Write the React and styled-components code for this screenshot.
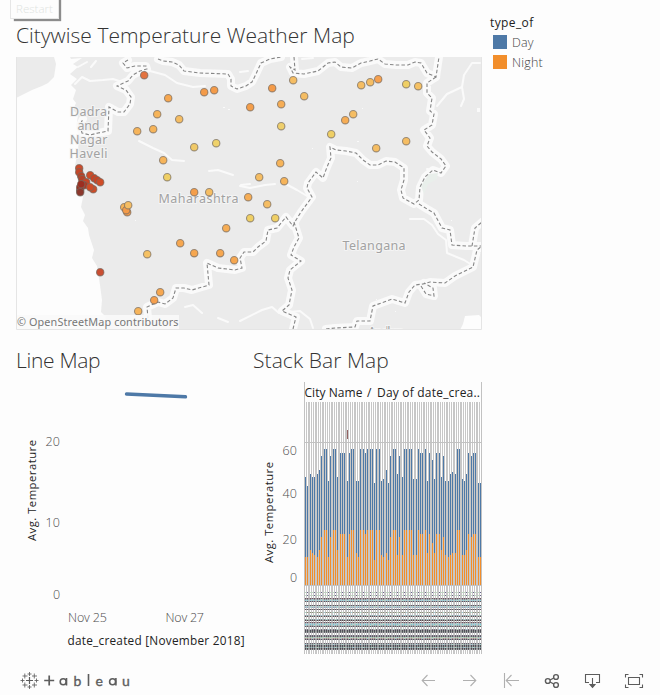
import React from 'react';
import styled, { createGlobalStyle } from 'styled-components';

const Global = createGlobalStyle`
  * { box-sizing: border-box; }
  body { margin: 0; background: #fdfdfd; font-family: 'Open Sans', 'Noto Sans', sans-serif; color: #333; }
  svg { display: block; }
  svg text { white-space: pre; }
`;
const Page = styled.main`
  position: relative; width: 660px; height: 695px; overflow: hidden;
  display: grid; grid-template-rows: 340px 322px 33px;
`;
const RestartButton = styled.button`
  position: absolute; left: 10px; top: -8px; width: 49px; height: 27px; padding: 7px 0 0;
  border: 1px solid #e6e6e6; background: #fdfdfd; color: #dfe4e1; text-align: center;
  font: 300 11.5px/16px 'Open Sans', sans-serif; box-shadow: 3px 3px 1px -1px #8c8c8c;
`;
const TopRow = styled.section`display: flex; padding-left: 16px;`;
const MapPanel = styled.div`width: 466px; padding-top: 20px;`;
const Title = styled.h1`
  margin: 0; height: ${p => p.$height}px; font-weight: 300; font-size: 21px; line-height: 30px;
  letter-spacing: ${p => p.$tracking || 0}px; white-space: nowrap; color: #333;
`;
const Legend = styled.aside`padding: 14px 0 0 8px;`;
const LegendTitle = styled.div`height: 18px; font-size: 12px; line-height: 18px; letter-spacing: .4px; color: #222;`;
const LegendItem = styled.div`
  display: flex; align-items: center; gap: 5px; height: 20px; padding-left: 3px; color: #444; font-size: 12.5px;
  font-weight: 300; letter-spacing: .2px;
`;
const Swatch = styled.i`width: 14px; height: 14px; background: ${p => p.$color};`;
const Charts = styled.section`display: grid; grid-template-columns: 237px 245px; padding-left: 16px;`;
const ChartPanel = styled.div`padding-top: 5px;`;
const Toolbar = styled.footer`display: flex; justify-content: space-between; padding: 8px 16px 0 20px;`;
const Actions = styled.div`display: flex; gap: 17px;`;
const Action = styled.button`
  width: 24px; height: 20px; padding: 0; border: 0; background: none; color: ${p => p.$dim ? '#b0b0b0' : '#5c5c5c'};
`;

const borders = [
  'M128 60L123 63L127 68L135 66L146 66L147 69L140 71L133 75L128 81L117 86L126 90L131 97L130 104L124 112L118 112L109 107L108 131L98 133L90 135L82 133L80 125L83 119',
  'M158 59L163 61L172 62L179 65L184 71L200 73L228 74L231 79L231 86L237 89L246 86L252 82L256 74L261 63L270 59L281 57',
  'M294 57L295 70L290 67L293 73L304 74L318 71L328 63L335 62L341 67L352 68L361 63L370 61L378 59L385 64L396 65L408 65L415 62L421 63L427 73L436 77L439 57',
  'M436 77L427 83L427 93L432 98L430 111L434 114L432 125L424 130L430 138L427 146L432 152L441 159L446 166L441 173L433 170L425 177L420 187L419 200L414 204L403 198L401 190L404 180L404 168L395 162L386 161L378 165L370 165L363 160L356 153L346 151L336 150L330 147L331 158L327 167L323 178L316 172L308 183L307 188L312 197L301 212L296 220L293 226L286 217L277 228L268 230L266 241L258 247L253 252L244 252L240 258L242 268L235 270L218 268L207 263L209 285L192 290L184 288L176 288L173 298L165 304L158 302L147 307L148 318',
  'M294 222L299 238L294 247L291 255L301 261L290 270L288 278L292 290L289 305L282 311L296 317L293 329',
  'M326 329L335 328L355 327L357 321L370 321L373 306L392 299L405 303L409 292L415 285L423 284L430 282L445 283L455 276L473 267L477 250L482 246',
  'M421 286L426 294L434 296L433 288L424 283',
  'M419 204L427 209L434 213L442 228L450 230L452 245L466 246L482 246',
  'M472 246L475 228L482 222',
];
const rivers = [
  'M75 84L82 77L90 81L103 80L113 79L122 82M150 71L165 75L177 83L193 87L205 86',
  'M139 141L153 148L164 153L172 160L184 161', 'M240 186L250 188L265 185L275 184M284 183L297 190L307 196',
  'M410 219L424 219L432 225L438 234L446 240L447 253L464 260L472 265',
  'M240 321L262 310L272 307L279 313L300 311L310 319L313 328',
  'M185 307L193 305L202 313M218 318L228 322M209 171L218 170L233 175M241 185L250 184',
  'M437 106L447 94L462 87L464 75L472 63L480 63M462 87L464 99L461 106',
  'M240 72L248 71M302 59L313 58M78 67L87 62M96 61L91 67M427 169L437 170',
];
// Each city is [x, y, temperature fill].
const cities = [
  [144,75,'#e3733f'],[168,98,'#f6a750'],[204,92,'#f49b49'],[214,90,'#f49b49'],[157,114,'#f6b45a'],[179,119,'#f5bd63'],
  [137,131,'#f6b45a'],[153,129,'#f6b45a'],[163,160,'#f6b45a'],[194,147,'#f0c967'],[216,143,'#efd26b'],[250,107,'#f49e4a'],
  [272,88,'#f49b49'],[293,80,'#f5bd63'],[281,104,'#f6ad55'],[304,96,'#f5bd63'],[281,126,'#efcf6c'],[331,134,'#efcf65'],
  [345,120,'#f6ad55'],[353,114,'#f5bd63'],[361,85,'#f5bd63'],[370,82,'#f5bd63'],[378,79,'#f6a04e'],[406,84,'#efcf65'],
  [418,86,'#f5c164'],[376,148,'#f5bd63'],[406,141,'#f5bd63'],[280,163,'#f6b45a'],[259,177,'#f5bd63'],[284,181,'#f6b45a'],
  [167,177,'#efcf65'],[194,192,'#f49e4a'],[209,192,'#f5bd63'],[248,197,'#f6ad55'],[267,204,'#f5bd63'],[250,218,'#efcf65'],
  [275,218,'#efcf65'],[226,228,'#f6ad55'],[180,243,'#f6a750'],[194,253,'#f6a750'],[220,253,'#f6a750'],[234,260,'#f6a750'],
  [147,254,'#f5c164'],[160,292,'#f6a750'],[154,300,'#f6a04e'],[138,311,'#f6b45a'],[124,207,'#f6b45a'],[127,212,'#f49b49'],
  [126,210,'#f49b49'],[128,205,'#f5bd63'],[100,272,'#c94e32'],
  [79,168,'#cc4c2d'],[79,172,'#c64728'],[81,176,'#b64227'],[82,179,'#b64227'],[90,175,'#cf4c27'],[94,178,'#c94424'],[97,180,'#c94424'],[100,182,'#cf4c27'],
  [86,182,'#c94424'],[84,185,'#ad3924'],[93,189,'#cf4c27'],[90,187,'#cf4c27'],[80,190,'#8e3525'],[80,187,'#9d2e20'],[80,192,'#8c382d'],[81,184,'#9d2e20'],
];

function WeatherMap() {
  return <svg width="466" height="273" viewBox="16 57 466 273">
    <path d="M16 57H482V330H16Z" fill="#ebebeb"/>
    <path d="M54 77L56 64L54 57H70L71 59L82 58L73 64L78 67L70 74L77 79L71 85L76 90L73 99L76 103L73 110L78 115L77 122L80 129L78 150L75 166L80 193L83 197L81 207L85 215L83 221L88 228L89 235L94 250L92 258L97 266L100 285L102 300L101 312L105 316L108 330H16V98L32 90L42 86L48 83Z" fill="#fdfdfd"/>
    <path d="M463 324L465 316L479 315L482 318V330H460Z" fill="#fdfdfd"/>
    <g fill="none" stroke="#fafafa" strokeLinejoin="round" strokeLinecap="round">
      {rivers.map(d => <path key={d} d={d} strokeWidth="2"/>)}
      {borders.map(d => <path key={d} d={d} strokeWidth="8"/>)}
    </g>
    <path d="M421 186L429 174L438 173L437 179L428 184L424 194Z" fill="#e9efeb"/>
    <g fill="none" stroke="#868686" strokeWidth="1.1" strokeDasharray="3.5 2.2">{borders.map(d => <path key={d} d={d}/>)}</g>
    <g fill="#fafafa"><path d="M223 107h2v1h-2zM228 109h2v1h-2zM357 141h2v1h-2zM362 108h1v1h-1zM312 148h1v1h-1zM357 181h1v1h-1zM395 311h1v1h-1zM451 220h1v1h-1zM135 220h1v1h-1zM207 260h1v1h-1zM376 299h1v1h-1zM477 108h3v4h-3z"/></g>
    <g fill="#a2a2a2" stroke="#f4f4f4" strokeWidth="2" paintOrder="stroke" fontFamily="Noto Sans, sans-serif" fontSize="12.5">
      <text x="70" y="116" textLength="37">Dadra</text><text x="77.5" y="130" textLength="22">and</text>
      <text x="70" y="144" textLength="37.5">Nagar</text><text x="69.5" y="158" textLength="38">Haveli</text>
      <text x="158.5" y="203" textLength="80">Maharashtra</text><text x="342.5" y="249.5" textLength="63">Telangana</text>
      <text x="368" y="336" textLength="36">Andhra</text>
    </g>
    <g stroke="#756b62" strokeOpacity=".7" strokeWidth="1.1">
      {cities.map(([x, y, fill], i) => <circle key={i} cx={x + .2} cy={y + .2} r="3.7" fill={fill}/>)}
    </g>
    <path d="M16 315H179V329H16Z" fill="#fafafa" fillOpacity=".9"/>
    <text x="17" y="326" textLength="161.5" fill="#777" fontFamily="Noto Sans, sans-serif" fontSize="10.8">© OpenStreetMap contributors</text>
    <path d="M16.5 57V329.5H481.5V57" fill="none" stroke="#e5e5e5"/>
  </svg>;
}

function LineChart() {
  return <svg width="237" height="276" viewBox="16 376 237 276" fontSize="12">
    <path d="M126.5 394L185.5 396.8" stroke="#4e79a7" strokeWidth="3.4" strokeLinecap="round"/>
    <text transform="translate(36 541)rotate(-90)" textLength="101" fill="#222" fontSize="11.3">Avg. Temperature</text>
    <g fill="#4c4c4c" fontWeight="300" fontSize="12.5">
      <text x="45.5" y="446" textLength="14.5">20</text><text x="45.5" y="527" textLength="14.5">10</text><text x="53" y="599">0</text>
      <text x="68" y="622" textLength="39">Nov 25</text><text x="165.5" y="622" textLength="38.5">Nov 27</text>
    </g>
    <text x="67.5" y="645" textLength="177" fill="#222" fontSize="11.8">date_created [November 2018]</text>
  </svg>;
}

// Top edge of every bar, in thirds of a pixel below y = 430.
const totals = [141,168,132,141,141,132,120,78,57,57,153,78,57,57,141,69,69,69,153,69,57,57,153,153,57,57,69,57,57,57,159,57,57,153,147,120,159,78,57,57,132,78,141,57,57,57,57,147,147,57,69,69,57,153,69,90,147,69,69,141,78,153,153,132,126,132,57,57,147,153,132,69,78,69,69,159,159];
const nights = {0:81,1:81,2:60,3:69,4:75,5:81,6:60,10:81,14:60,18:81,22:69,23:81,30:90,33:75,34:81,35:69,36:90,40:75,42:75,47:75,48:75,53:69,55:39,56:69,59:60,61:75,62:81,63:75,64:69,65:69,68:75,69:75,70:60,75:81,76:81};
const bars = totals.map((top, i) => ({
  x: 305 + Math.floor(i / 10) * 23 + [0,2,5,7,9,12,14,16,19,21][i % 10],
  top: 430 + top / 3,
  split: nights[i] === undefined ? 530 + (top - 57) / 3 : 530 + nights[i] / 3,
}));
// Bands of the condensed vertical date labels: [y, height, colour, opacity over the rules].
const labelBands = [
  [598,1,'#6d5560',.5],[599,1,'#7c8c94',.35],[600,1,'#8fd0dd',.25],[601,1,'#5c5560',.45],[605,1,'#5c5560',.5],[606,1,'#a7d3d3',.2],[607,1,'#8fa5c0',.3],
  [609,1,'#5c5560',.5],[612,1,'#8a8f78',.3],[615,1,'#84a4ac',.3],[616,1,'#5c4a50',.3],[619,1,'#7a9298',.3],[620,1,'#54484e',.5],[622,1,'#6d5560',.5],
  [623,1,'#96b6bd',.25],[624,1,'#7cc8d4',.3],[625,1,'#8fa8a8',.3],[626,1,'#5c5560',.5],[629,1,'#77747f',.3],[630,1,'#4f4b57',.5],
  [631,1,'#4f5857',.5],[632,1,'#66626e',.4],[635,1,'#6a6474',.4],[636,1,'#5b5763',.5],[637,1,'#a0c4a4',.3],[638,1,'#a98a8a',.3],[639,1,'#555060',.5],
  [643,1,'#66626e',.4],[644,1,'#88a0a0',.3],[645,1,'#4f4b57',.5],[646,1,'#4f5857',.5],[647,1,'#7a949a',.3],[648,1,'#4b484e',.5],[649,1,'#5d5f66',.4],
];
const flecks = ['#bdebc5', '#9fd9ea', '#aeeedd'];

function StackedChart() {
  return <svg width="245" height="282" viewBox="253 376 245 282" shapeRendering="crispEdges" fontSize="12">
    <path d="M304 402H481V654H304Z" fill="#c7c7c7"/>
    {bars.map(({x, top, split}, i) => <g key={i}>
      <path d={`M${x} 402h1V654h-1Z`} fill="#fff"/>
      <path d={`M${x} ${Math.round(top)}h1V585h-1Z`} fill="#4e79a7"/>
      <path d={`M${x} ${Math.round(split)}h1V585h-1Z`} fill="#f28e2b"/>
      <path d={`M${x} 592h1v1h-1ZM${x} 595h1v1h-1Z`} fill={i % 3 === 1 ? '#68648a' : '#b9dcbc'}/>
      {labelBands.map(([y, h, color], n) => <path key={y} d={`M${x} ${y}h1v${h}h-1Z`} fill={(i + n) % 4 === 0 && color > '#7' ? flecks[(i + n) % 3] : color}/>)}
    </g>)}
    {labelBands.map(([y, h, color, opacity]) => <path key={y} d={`M305 ${y}H481v${h}H305Z`} fill={color} fillOpacity={opacity * .8}/>)}
    <path d="M304 382h1V654h-1ZM481 382h1V654h-1ZM304 442H481v1H304ZM304 585H481v1H304Z" fill="#c2c2c2"/>
    <path d="M347 430h1v9h-1Z" fill="#946363"/>
    <g shapeRendering="auto">
      <g fill="#222">
        <text x="304.5" y="397" textLength="58">City Name</text><text x="367" y="397">/</text>
        <text x="377" y="397" textLength="103">Day of date_crea..</text>
      </g>
      <text transform="translate(273 563)rotate(-90)" textLength="101" fill="#222" fontSize="11.3">Avg. Temperature</text>
      <g fill="#4c4c4c" fontWeight="300" fontSize="12.5">
        <text x="282.5" y="455" textLength="14.5">60</text><text x="282.5" y="498" textLength="14.5">40</text>
        <text x="282.5" y="544" textLength="14.5">20</text><text x="290" y="582">0</text>
      </g>
    </g>
  </svg>;
}

function Logo() {
  return <svg width="112" height="20" viewBox="20 670 112 20" fill="none" stroke="#5d5d5d">
    <path d="M29.5 677v7M26 680.5h7" strokeWidth="1.2"/>
    <path d="M29.5 672v4M27.5 674h4M29.5 685v4M27.5 687h4M22.5 678.5v4M20.5 680.5h4M36.5 678.5v4M34.5 680.5h4M24.8 673.5v5M22.5 676h5M34.3 673.5v5M32 676h5M24.8 682.5v5M22.5 685h5M34.3 682.5v5M32 685h5" strokeWidth=".85"/>
    <path d="M49.2 675.5v10M44.2 680.5h10" strokeWidth="1.7"/>
    <g fill="#5d5d5d" stroke="#5d5d5d" strokeWidth=".35" fontSize="14" fontFamily="Lato, sans-serif">
      <text x="73.5" y="685.5">b</text><text x="95.5" y="685.5">e</text><text x="122" y="685.5">u</text>
    </g>
    <g strokeWidth="1.6"><circle cx="63.2" cy="681.8" r="3"/><path d="M66.5 678v7.6M88.5 674v12"/><circle cx="112.6" cy="681.8" r="3"/><path d="M115.9 678v7.6"/></g>
  </svg>;
}
const icons = [
  ['Undo', true, <path d="M20 10.5H7.5M12.5 5L7.2 10.5L12.5 16"/>],
  ['Redo', true, <path d="M7 10.5H19.5M14.5 5L19.8 10.5L14.5 16"/>],
  ['Reset', true, <path d="M7.5 3V18M22 10.5H9.5M14.5 5L9.2 10.5L14.5 16"/>],
  ['Share', false, <g strokeWidth="1.4"><circle cx="9.8" cy="11" r="2.4"/><circle cx="18" cy="7" r="2.4"/><circle cx="18" cy="15" r="2.4"/><path d="M12 10L15.8 8M12 12L15.8 14"/></g>],
  ['Download', false, <><path d="M10 12.5H6.5V4.5H20.5V12.5H17M13.5 8V15"/><path d="M11 14.5H16L13.5 17.5Z" fill="currentColor"/></>],
  ['Full screen', false, <path d="M8.5 7.5H19.5V14.5H8.5ZM8.5 4.5H5.5V7.5M19.5 4.5H22.5V7.5M5.5 14.5V17.5H8.5M19.5 17.5H22.5V14.5"/>],
];

export default function App() {
  return <><Global/><Page>
    <RestartButton>Restart</RestartButton>
    <TopRow><MapPanel><Title $height={37} $tracking={0.03}>Citywise Temperature Weather Map</Title><WeatherMap/></MapPanel>
      <Legend><LegendTitle>type_of</LegendTitle><LegendItem><Swatch $color="#4e79a7"/>Day</LegendItem><LegendItem><Swatch $color="#f28e2b"/>Night</LegendItem></Legend>
    </TopRow>
    <Charts><ChartPanel><Title $height={31} $tracking={-0.3}>Line Map</Title><LineChart/></ChartPanel><ChartPanel><Title $height={31} $tracking={0.08}>Stack Bar Map</Title><StackedChart/></ChartPanel></Charts>
    <Toolbar><Logo/><Actions>{icons.map(([label, dim, drawing]) => <Action key={label} aria-label={label} $dim={dim}>
      <svg width="24" height="20" viewBox="0 0 24 20" fill="none" stroke="currentColor" strokeWidth="1.1">{drawing}</svg>
    </Action>)}</Actions></Toolbar>
  </Page></>;
}
